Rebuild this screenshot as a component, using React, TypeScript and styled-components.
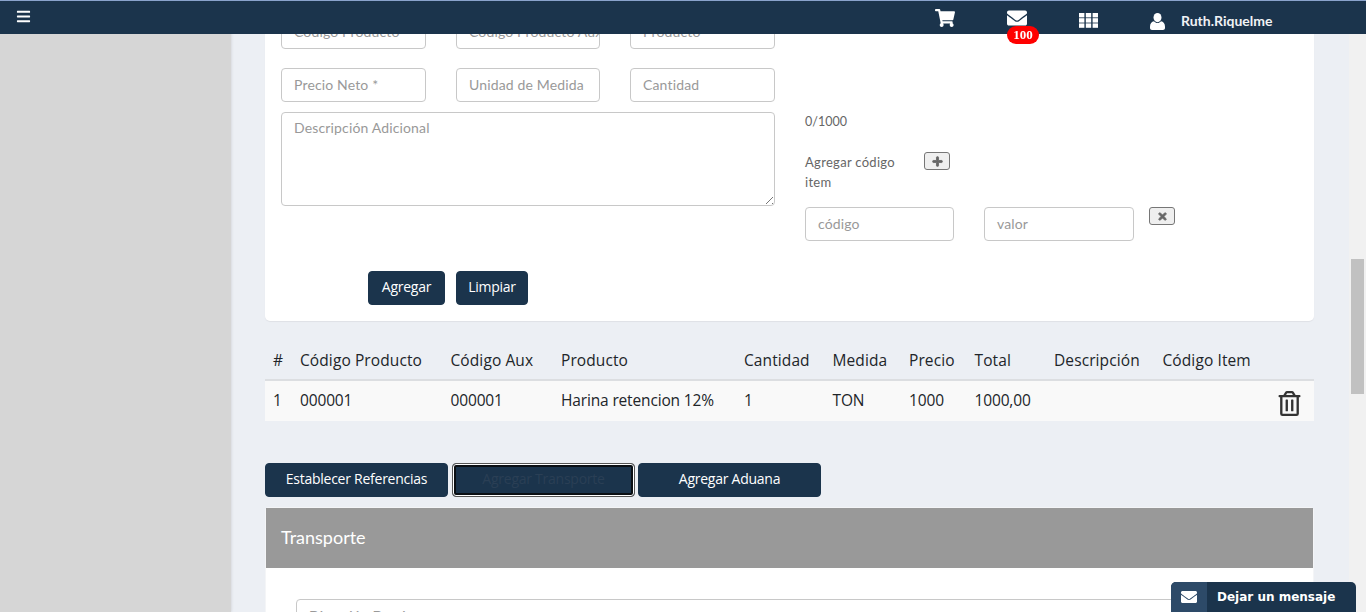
import styled, { createGlobalStyle } from "styled-components";
import {
  FaBars,
  FaEnvelope,
  FaPlus,
  FaRegTrashAlt,
  FaShoppingCart,
  FaTimes,
} from "react-icons/fa";

const columns = [
  { label: "#", width: 27 },
  { label: "Código Producto", width: 150.5 },
  { label: "Código Aux", width: 110.5 },
  { label: "Producto", width: 183 },
  { label: "Cantidad", width: 88.5 },
  { label: "Medida", width: 76.5 },
  { label: "Precio", width: 65.5 },
  { label: "Total", width: 79.5 },
  { label: "Descripción", width: 108.5 },
  { label: "Código Item", width: 110 },
];

const row = ["1", "000001", "000001", "Harina retencion 12%", "1", "TON", "1000", "1000,00", ""];

const GlobalStyle = createGlobalStyle`
  html, body {
    margin: 0;
    height: 100%;
    overflow: hidden;
  }
  body {
    background: #eceff4;
    font-family: "Lato", "Liberation Sans", sans-serif;
  }
  * {
    box-sizing: border-box;
  }
`;

const Page = styled.div`
  display: flex;
  height: 612px;
  overflow: hidden;
`;

const TopBar = styled.header`
  position: fixed;
  top: 0;
  left: 0;
  right: 0;
  height: 34px;
  display: flex;
  align-items: center;
  padding-left: 16px;
  background: #1b344c;
  border-top: 1px solid #8aa3cc;
  color: #fff;
  z-index: 10;
`;

const Menu = styled.div`
  display: flex;
  font-size: 15px;
  margin-top: -2px;
`;

const NavItems = styled.nav`
  margin-left: auto;
  width: 431px;
  display: flex;
  align-items: center;
  height: 100%;
`;

const NavIcon = styled.div<{ $width: number; $drop?: number }>`
  position: relative;
  width: ${(p) => p.$width}px;
  display: flex;
  font-size: 20px;
  padding-top: ${(p) => p.$drop ?? 0}px;
`;

const Badge = styled.span`
  position: absolute;
  top: 18px;
  left: 0;
  width: 32px;
  height: 18px;
  border-radius: 9px;
  background: #f00;
  color: #fff;
  font: bold 13px/18px "Liberation Serif", serif;
  text-align: center;
`;

const UserName = styled.span`
  font-size: 14px;
  font-weight: 700;
  color: #f0f2f5;
  margin-left: 1px;
  padding-top: 5px;
`;

const Sidebar = styled.aside`
  width: 231px;
  flex: none;
  background: #d6d6d6;
  box-shadow: 0 0 3px rgba(0, 0, 0, 0.15);
`;

const Main = styled.main`
  flex: 1;
  min-width: 0;
  padding: 0 35px 0 34px;
`;

const Card = styled.section`
  height: 321px;
  margin-bottom: 19px;
  padding: 15px 16px 0;
  background: #fff;
  border-radius: 0 0 5px 5px;
  box-shadow: 0 1px 1px rgba(0, 0, 0, 0.06);
`;

const FormColumns = styled.div`
  display: flex;
  gap: 30px;
`;

const LeftForm = styled.div`
  width: 494px;
  flex: none;
`;

const FieldRow = styled.div`
  display: grid;
  grid-template-columns: 145px 144px 145px;
  gap: 19px 30px;
  margin-bottom: 10px;
`;

const Input = styled.div<{ $width?: number }>`
  height: 34px;
  ${(p) => (p.$width ? `width: ${p.$width}px; flex: none;` : "")}
  padding: 0 12px;
  border: 1px solid #c8c8c8;
  border-radius: 4px;
  background: #fff;
  color: #999;
  font-size: 14px;
  letter-spacing: 0.15px;
  line-height: 32px;
  white-space: nowrap;
  overflow: hidden;
`;

const TextArea = styled(Input)`
  height: 94px;
  line-height: 30px;
  position: relative;
  &::after {
    content: "";
    position: absolute;
    right: 1px;
    bottom: 1px;
    width: 8px;
    height: 8px;
    background: repeating-linear-gradient(135deg, transparent 0 2px, #777 2px 3px, transparent 3px 4px);
    clip-path: polygon(100% 0, 100% 100%, 0 100%);
  }
`;

const RightForm = styled.div`
  flex: 1;
  padding-top: 97px;
  color: #666;
  font-size: 13px;
`;

const Counter = styled.div`
  font-size: 12.5px;
  line-height: 20px;
  height: 40px;
`;

const AddCode = styled.div`
  display: flex;
  align-items: flex-start;
  margin-bottom: 15px;
`;

const AddLabel = styled.div`
  width: 119px;
  padding-right: 15px;
  line-height: 20px;
  letter-spacing: 0.3px;
`;

const IconButton = styled.button`
  width: 26px;
  height: 18px;
  padding: 0;
  display: flex;
  align-items: center;
  justify-content: center;
  background: #efefef;
  border: 1px solid #767676;
  border-radius: 3px;
  color: #666;
  font-size: 11px;
  & svg {
    stroke: currentColor;
    stroke-width: 40px;
  }
`;

const CodeRow = styled.div`
  display: flex;
  gap: 15px;
  align-items: flex-start;
`;

const CodeInput = styled(Input)`
  margin-right: 15px;
`;

const Actions = styled.div`
  display: flex;
  gap: 11px;
  margin: 30px 0 0 87px;
`;

const DarkButton = styled.button<{ $width: number }>`
  width: ${(p) => p.$width}px;
  height: 34px;
  padding: 0 0 3px;
  background: #1b344c;
  border: 1px solid #1b344c;
  border-radius: 4px;
  color: #fff;
  font-family: "Open Sans", "Noto Sans", sans-serif;
  font-size: 14px;
  letter-spacing: -0.25px;
`;

const FocusedButton = styled(DarkButton)`
  margin-left: 1px;
  border: 1px solid #555;
  box-shadow: inset 0 0 0 1px #fff, inset 0 0 0 3px #0a0f14;
  color: #2a3f55;
`;

const ItemsTable = styled.table`
  width: 100%;
  table-layout: fixed;
  border-collapse: collapse;
  margin-bottom: 42px;
  font-family: "Open Sans", "Noto Sans", sans-serif;
  font-size: 15.5px;
  color: #212529;
`;

const Th = styled.th<{ $width: number }>`
  width: ${(p) => p.$width}px;
  height: 40px;
  padding: 0 0 0 8px;
  text-align: left;
  font-weight: 400;
  letter-spacing: 0.1px;
  white-space: nowrap;
  border-bottom: 2px solid #dcdee1;
`;

const LastTh = styled.th`
  border-bottom: 2px solid #dcdee1;
`;

const Td = styled.td`
  height: 41px;
  padding: 0 0 3px 8px;
  background: #f9f9f9;
  letter-spacing: -0.15px;
  white-space: nowrap;
`;

const TrashCell = styled(Td)`
  padding: 4px 12px 0 0;
  text-align: right;
  font-size: 25px;
  line-height: 0;
  color: #333;
`;

const ButtonRow = styled.div`
  display: flex;
  gap: 3px;
  margin-bottom: 10px;
`;

const Panel = styled.section`
  background: #fff;
  border: 1px solid #f4f5f7;
  border-bottom: 0;
  border-radius: 4px 4px 0 0;
  height: 140px;
`;

const PanelHeader = styled.div`
  height: 60px;
  padding-left: 15px;
  background: #999;
  color: #fff;
  font-size: 18px;
  line-height: 58px;
`;

const PanelBody = styled.div`
  padding: 31px 0 0 30px;
`;

const WideInput = styled(Input)`
  height: 40px;
  line-height: 32px;
`;

const Rail = styled.div`
  width: 17px;
  flex: none;
  background: #f1f1f1;
  padding: 259px 2px 0;
`;

const Thumb = styled.div`
  height: 135px;
  background: #c1c1c1;
`;

const ChatTab = styled.div`
  position: fixed;
  right: 10px;
  bottom: 0;
  width: 185px;
  height: 30px;
  display: flex;
  align-items: center;
  background: #1b344c;
  border-radius: 5px 5px 0 0;
  overflow: hidden;
  color: #fff;
  font: bold 12px "DejaVu Sans", sans-serif;
`;

const ChatIcon = styled.div`
  width: 36px;
  height: 100%;
  margin-right: 10px;
  display: flex;
  align-items: center;
  justify-content: center;
  background: #2d4a68;
  font-size: 16px;
`;

function GridIcon() {
  return (
    <svg width="19" height="15" viewBox="0 0 19 15" fill="#fff">
      {[0, 5.2, 10.4].map((y) =>
        [0, 6.8, 13.6].map((x) => <rect key={`${x}-${y}`} x={x} y={y} width="5.4" height="4.4" />),
      )}
    </svg>
  );
}

function UserIcon() {
  return (
    <svg width="15" height="17" viewBox="0 0 15 17" fill="#fff">
      <ellipse cx="7.5" cy="4.6" rx="4" ry="4.6" />
      <path d="M4 8.2C5 9.4 6.2 10 7.5 10s2.5-.6 3.5-1.8c2.4.4 4 2.2 4 5.6V15c0 1.2-.9 2-2 2H2c-1.100 0-2-.8-2-2v-1.200C0 10.400 1.600 8.600 4 8.200z" />
    </svg>
  );
}

export default function App() {
  return (
    <>
      <GlobalStyle />
      <TopBar>
        <Menu>
          <FaBars />
        </Menu>
        <NavItems>
          <NavIcon $width={72}>
            <FaShoppingCart />
          </NavIcon>
          <NavIcon $width={72}>
            <FaEnvelope />
            <Badge>100</Badge>
          </NavIcon>
          <NavIcon $width={71} $drop={5}>
            <GridIcon />
          </NavIcon>
          <NavIcon $width={30} $drop={7}>
            <UserIcon />
          </NavIcon>
          <UserName>Ruth.Riquelme</UserName>
        </NavItems>
      </TopBar>
      <Page>
        <Sidebar />
        <Main>
          <Card>
            <FormColumns>
              <LeftForm>
                <FieldRow>
                  <Input>Código Producto *</Input>
                  <Input>Código Producto Aux</Input>
                  <Input>Producto</Input>
                  <Input>Precio Neto *</Input>
                  <Input>Unidad de Medida</Input>
                  <Input>Cantidad</Input>
                </FieldRow>
                <TextArea>Descripción Adicional</TextArea>
              </LeftForm>
              <RightForm>
                <Counter>0/1000</Counter>
                <AddCode>
                  <AddLabel>Agregar código item</AddLabel>
                  <IconButton>
                    <FaPlus />
                  </IconButton>
                </AddCode>
                <CodeRow>
                  <CodeInput $width={149}>código</CodeInput>
                  <Input $width={150}>valor</Input>
                  <IconButton>
                    <FaTimes />
                  </IconButton>
                </CodeRow>
              </RightForm>
            </FormColumns>
            <Actions>
              <DarkButton $width={77}>Agregar</DarkButton>
              <DarkButton $width={72}>Limpiar</DarkButton>
            </Actions>
          </Card>
          <ItemsTable>
            <thead>
              <tr>
                {columns.map((col) => (
                  <Th key={col.label} $width={col.width}>
                    {col.label}
                  </Th>
                ))}
                <LastTh />
              </tr>
            </thead>
            <tbody>
              <tr>
                {row.map((cell, i) => (
                  <Td key={i}>{cell}</Td>
                ))}
                <Td />
                <TrashCell>
                  <FaRegTrashAlt />
                </TrashCell>
              </tr>
            </tbody>
          </ItemsTable>
          <ButtonRow>
            <DarkButton $width={183}>Establecer Referencias</DarkButton>
            <FocusedButton $width={183}>Agregar Transporte</FocusedButton>
            <DarkButton $width={183}>Agregar Aduana</DarkButton>
          </ButtonRow>
          <Panel>
            <PanelHeader>Transporte</PanelHeader>
            <PanelBody>
              <WideInput>Dirección Destino</WideInput>
            </PanelBody>
          </Panel>
        </Main>
        <Rail>
          <Thumb />
        </Rail>
      </Page>
      <ChatTab>
        <ChatIcon>
          <FaEnvelope />
        </ChatIcon>
        Dejar un mensaje
      </ChatTab>
    </>
  );
}
